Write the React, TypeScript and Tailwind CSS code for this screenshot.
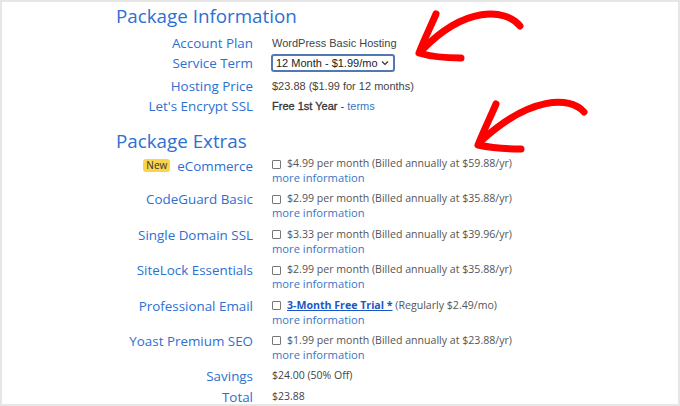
import React from "react";

const extras = [
  { label: "eCommerce", price: "$4.99 per month (Billed annually at $59.88/yr)", badge: true },
  { label: "CodeGuard Basic", price: "$2.99 per month (Billed annually at $35.88/yr)" },
  { label: "Single Domain SSL", price: "$3.33 per month (Billed annually at $39.96/yr)" },
  { label: "SiteLock Essentials", price: "$2.99 per month (Billed annually at $35.88/yr)" },
  { label: "Professional Email", price: "", trial: true },
  { label: "Yoast Premium SEO", price: "$1.99 per month (Billed annually at $23.88/yr)" },
];

const arial = { fontFamily: '"Liberation Sans", Arial, sans-serif' };

function Checkbox() {
  return <span className="inline-block w-[9px] h-[9px] border border-[#777] rounded-[1px] bg-white mr-[6px] shrink-0" />;
}

function Label({ children }: { children: React.ReactNode }) {
  return (
    <div className="w-[251px] shrink-0 text-right text-[13.4px] text-[#2d6fd2] leading-[18px]">
      {children}
    </div>
  );
}

export default function App() {
  return (
    <div
      className="relative w-[680px] h-[406px] overflow-hidden bg-white border-2 border-[#e6e6e6]"
      style={{ fontFamily: '"Open Sans", "Noto Sans", sans-serif' }}
    >
      <div className="flex flex-col">
        {/* Package Information */}
        <h2 className="ml-[114px] text-[18.8px] leading-[28px] text-[#2d6fd2]">Package Information</h2>

        <div className="flex items-center h-[20px] mt-[3px]">
          <Label>Account Plan</Label>
          <div className="ml-[19px] text-[11px] text-[#444]" style={arial}>
            WordPress Basic Hosting
          </div>
        </div>

        <div className="flex items-center h-[20px]">
          <Label>Service Term</Label>
          <div
            className="ml-[18px] flex items-center justify-between w-[124px] h-[18px] border-2 border-[#5277b3] rounded-[3px] pl-[3px] pr-[2px] text-[11px] leading-[14px] text-[#222] whitespace-nowrap"
            style={arial}
          >
            <span>12 Month - $1.99/mo</span>
            <svg width="8" height="6" viewBox="0 0 8 6" className="mr-[2px]">
              <path d="M1 1.5 L4 4.5 L7 1.5" fill="none" stroke="#333" strokeWidth="1.2" />
            </svg>
          </div>
        </div>

        <div className="flex items-center h-[20px] mt-[3px]">
          <Label>Hosting Price</Label>
          <div className="ml-[19px] text-[11px] text-[#444]" style={arial}>
            $23.88 ($1.99 for 12 months)
          </div>
        </div>

        <div className="flex items-center h-[20px]">
          <Label>Let's Encrypt SSL</Label>
          <div className="ml-[19px] text-[11px] text-[#333]" style={arial}>
            <span className="[-webkit-text-stroke:0.3px_#333]">Free 1st Year</span>
            <span> - </span>
            <span className="text-[#3a75c4]">terms</span>
          </div>
        </div>

        {/* Package Extras */}
        <h2 className="ml-[114px] mt-[11px] text-[18.8px] leading-[28px] text-[#2d6fd2]">Package Extras</h2>

        <div className="flex flex-col -mt-[1px]">
          {extras.map((e) => (
            <div key={e.label} className="flex h-[35.4px] pt-[1px]">
              <Label>
                <span className="inline-flex items-center justify-end">
                  {e.badge && (
                    <span className="inline-block bg-[#fbd449] text-[#333] text-[10px] leading-[13px] px-[3px] rounded-[3px] mr-[7px]">
                      New
                    </span>
                  )}
                  {e.label}
                </span>
              </Label>
              <div className="ml-[19px] flex flex-col">
                <div className="flex items-center h-[16px] mt-[1px] text-[10.6px] text-[#555]">
                  <Checkbox />
                  {e.trial ? (
                    <span>
                      <span className="font-bold text-[#1b57c7] underline">3-Month Free Trial *</span>{" "}
                      (Regularly $2.49/mo)
                    </span>
                  ) : (
                    <span>{e.price}</span>
                  )}
                </div>
                <div className="text-[11.2px] leading-[12px] text-[#3a75c4]">more information</div>
              </div>
            </div>
          ))}
        </div>

        <div className="flex items-center h-[20px]">
          <Label>Savings</Label>
          <div className="ml-[19px] text-[10.5px] text-[#444]">$24.00 (50% Off)</div>
        </div>
        <div className="flex items-center h-[20px] mt-[1px]">
          <Label>Total</Label>
          <div className="ml-[19px] text-[10.5px] text-[#444]">$23.88</div>
        </div>
      </div>

      {/* red hand-drawn arrows */}
      <svg className="absolute -left-[2px] -top-[2px] pointer-events-none" width="680" height="406" viewBox="0 0 680 406">
        <g fill="none" stroke="#f00" strokeWidth="7" strokeLinecap="round" strokeLinejoin="round">
          <path d="M520 26 C505 8 465 6 422 50" />
          <path d="M436 14 C430 28 424 40 419 53 C432 57 448 58 461 58" />
          <path d="M584 112 C570 96 530 96 481 141" />
          <path d="M496 104 C490 118 484 130 478 145 C492 148 506 149 521 149" />
        </g>
      </svg>
    </div>
  );
}
